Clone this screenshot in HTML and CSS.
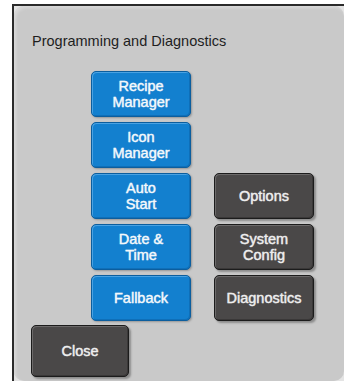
FILE: index.html
```html
<!DOCTYPE html>
<html lang="en">
<head>
  <meta charset="UTF-8">
  <meta name="viewport" content="width=device-width, initial-scale=1.0">
  <title>Programming and Diagnostics</title>
  <link rel="stylesheet" href="styles.css">
</head>
<body>
  <div class="frame">
    <div class="panel">
      <h1 class="title">Programming and Diagnostics</h1>

      <div class="menu">
        <button class="btn blue r1">Recipe<br>Manager</button>
        <button class="btn blue r2">Icon<br>Manager</button>
        <button class="btn blue r3">Auto<br>Start</button>
        <button class="btn dark r3 c2">Options</button>
        <button class="btn blue r4">Date &amp;<br>Time</button>
        <button class="btn dark r4 c2">System<br>Config</button>
        <button class="btn blue r5">Fallback</button>
        <button class="btn dark r5 c2">Diagnostics</button>
      </div>

      <button class="btn dark close">Close</button>
    </div>
  </div>
</body>
</html>
```

FILE: styles.css
```css
body {
  margin: 0;
  background-color: #fff;
  font-family: "Liberation Sans", Arial, sans-serif;
}
.frame {
  margin: 4px 0 0 12px;
  width: 332px;
  height: 377px;
  box-sizing: border-box;
  border-top: 2px solid #2b2b2b;
  border-left: 2px solid #2b2b2b;
  background-color: #e4e4e4;
}
.panel {
  height: 100%;
  box-sizing: border-box;
  border-radius: 10px;
  background-color: #c9c9c9;
  box-shadow: inset 2px 2px 3px #d9d9d9;
  padding: 27px 0 0 18px;
}
.title {
  margin: 0;
  font-size: 14.5px;
  line-height: 17px;
  font-weight: normal;
  color: #1e1e1e;
}
.menu {
  display: grid;
  grid-template-columns: 100px 100px;
  grid-auto-rows: 46px;
  column-gap: 23px;
  row-gap: 5px;
  margin: 21px 0 0 59px;
}
.r1 { grid-row: 1; grid-column: 1; }
.r2 { grid-row: 2; grid-column: 1; }
.r3 { grid-row: 3; grid-column: 1; }
.r4 { grid-row: 4; grid-column: 1; }
.r5 { grid-row: 5; grid-column: 1; }
.c2 { grid-column: 2; }
.btn {
  display: block;
  box-sizing: border-box;
  margin: 0;
  padding: 0;
  border-radius: 5px;
  font-family: "Liberation Sans", Arial, sans-serif;
  font-size: 14.5px;
  line-height: 16px;
  color: #f4f8fb;
  -webkit-text-stroke: 0.3px #f4f8fb;
  text-shadow: 0 0 1px rgba(255,255,255,0.5);
  cursor: pointer;
}
.blue {
  border: 1px solid #0c5e9e;
  background-color: #1380cf;
  box-shadow: inset 1px 1px 0 #4aa2e2, inset -1px -1px 0 #0f6fb8, 1px 1px 2px rgba(0,0,0,0.25);
}
.dark {
  border: 1px solid #1c1c1c;
  background-color: #4a4848;
  box-shadow: inset 1px 1px 0 #6c6a6a, inset -1px -1px 0 #3a3838, 2px 2px 2px rgba(0,0,0,0.3);
  color: #eeeeee;
  -webkit-text-stroke: 0.3px #eeeeee;
}
.close {
  width: 98px;
  height: 52px;
  margin: 4px 0 0 -1px;
}
```
